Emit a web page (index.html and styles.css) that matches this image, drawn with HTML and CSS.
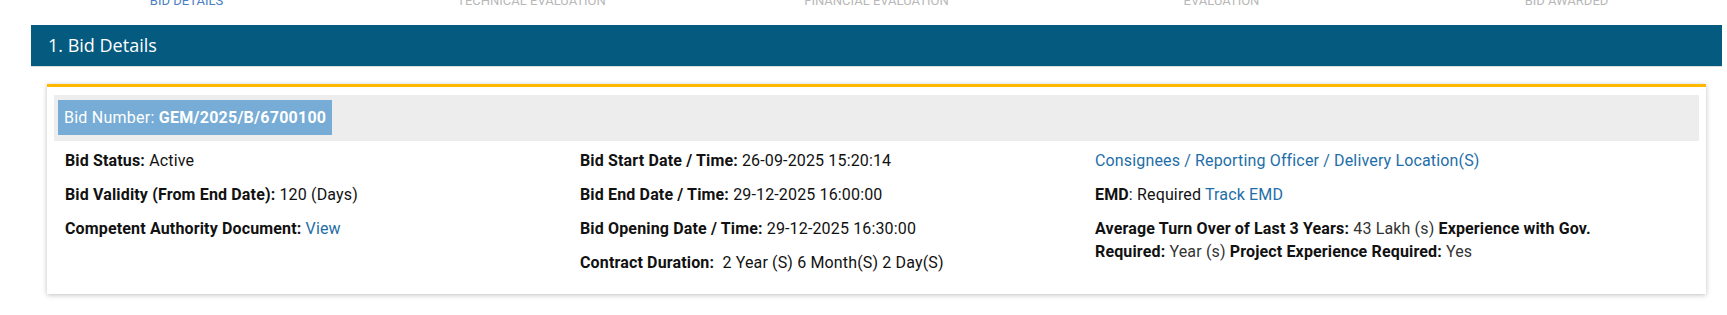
FILE: index.html
```html
<!DOCTYPE html>
<html lang="en">
<head>
    <meta charset="UTF-8">
    <meta name="viewport" content="width=device-width, initial-scale=1.0">
    <title>Bid Details</title>
    <link rel="stylesheet" href="styles.css">
</head>
<body>
    <div class="steps">
        <div class="step active">BID DETAILS</div>
        <div class="step">TECHNICAL EVALUATION</div>
        <div class="step">FINANCIAL EVALUATION</div>
        <div class="step">EVALUATION</div>
        <div class="step">BID AWARDED</div>
    </div>

    <div class="section">
        <div class="section-title">1. Bid Details</div>
        <div class="section-body">
            <div class="card">
                <div class="bid-head">
                    <span class="bid-number">Bid Number: <strong>GEM/2025/B/6700100</strong></span>
                </div>
                <div class="bid-grid">
                    <div class="bid-col">
                        <p><b>Bid Status:</b> Active</p>
                        <p><b>Bid Validity (From End Date):</b> 120 (Days)</p>
                        <p><b>Competent Authority Document:</b> <a href="#">View</a></p>
                    </div>
                    <div class="bid-col">
                        <p><b>Bid Start Date / Time:</b> 26-09-2025 15:20:14</p>
                        <p><b>Bid End Date / Time:</b> 29-12-2025 16:00:00</p>
                        <p><b>Bid Opening Date / Time:</b> 29-12-2025 16:30:00</p>
                        <p><b>Contract Duration:</b>&nbsp; 2 Year (S) 6 Month(S) 2 Day(S)</p>
                    </div>
                    <div class="bid-col">
                        <p><a href="#">Consignees / Reporting Officer / Delivery Location(S)</a></p>
                        <p><b>EMD</b>: Required <a href="#">Track EMD</a></p>
                        <p class="muted"><b>Average Turn Over of Last 3 Years:</b> 43 Lakh (s) <b>Experience with Gov. Required:</b> Year (s) <b>Project Experience Required:</b> Yes</p>
                    </div>
                </div>
            </div>
        </div>
    </div>
</body>
</html>
```

FILE: styles.css
```css
body {
    margin: 0;
    padding-bottom: 20px;
    font-family: Roboto, "Liberation Sans", sans-serif;
    font-size: 16px;
    letter-spacing: 0.15px;
    color: #111;
    background: #fff;
    overflow: hidden;
}
.steps {
    display: flex;
    margin: -7px 0 0 14px;
    overflow: hidden;
    letter-spacing: 0;
}
.step {
    flex: 0 0 345px;
    text-align: center;
    font-size: 13px;
    line-height: 15px;
    color: #b8b8b8;
}
.step.active {
    color: #4a7fc1;
}
.section {
    margin: 17px 5px 0 31px;
}
.section-title {
    background: #055a80;
    color: #fff;
    font-family: "Open Sans", "Liberation Sans", sans-serif;
    font-size: 18px;
    letter-spacing: 0;
    height: 41px;
    line-height: 41px;
    padding-left: 17px;
    border-bottom: 1px solid #dcdfe2;
}
.section-body {
    padding: 17px 16px 0;
}
.card {
    background: #fff;
    border-top: 3px solid #ffb800;
    box-shadow: 0 1px 5px rgba(0,0,0,0.25);
    padding: 8px 7px 9px;
}
.bid-head {
    background: #ededed;
    padding: 5px 4px 6px;
}
.bid-number {
    display: inline-block;
    background: #76acd5;
    color: #fff;
    font-size: 16px;
    letter-spacing: 0.25px;
    line-height: 35px;
    padding: 0 6px;
}
.bid-number strong {
    font-weight: 700;
}
.bid-grid {
    display: grid;
    grid-template-columns: 515px 515px 515px;
    padding: 8px 0 0 11px;
}
.bid-col p {
    margin: 0 0 11px;
    line-height: 23px;
}
.bid-col b {
    font-weight: 700;
    color: #111;
}
.bid-col a {
    color: #1e6ea7;
    text-decoration: none;
}
.muted {
    color: #333;
}
```
